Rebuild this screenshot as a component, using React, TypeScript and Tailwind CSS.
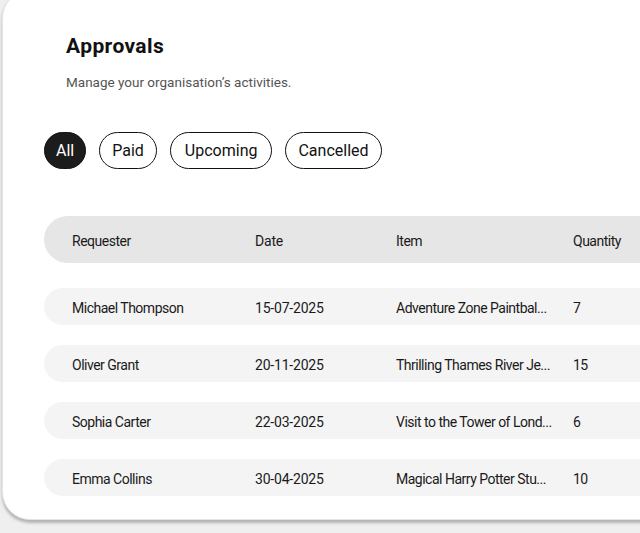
const filters = ["All", "Paid", "Upcoming", "Cancelled"];

const pillPad = ["px-[11px]", "px-[12px]", "px-[14px]", "px-[12px]"];

const rows = [
  { name: "Michael Thompson", date: "15-07-2025", item: "Adventure Zone Paintbal...", qty: "7" },
  { name: "Oliver Grant", date: "20-11-2025", item: "Thrilling Thames River Je...", qty: "15" },
  { name: "Sophia Carter", date: "22-03-2025", item: "Visit to the Tower of Lond...", qty: "6" },
  { name: "Emma Collins", date: "30-04-2025", item: "Magical Harry Potter Stu...", qty: "10" },
];

function Row({ cells, head }: { cells: string[]; head?: boolean }) {
  return (
    <div
      className={`flex items-center pl-[28px] pt-[3px] rounded-l-full text-[14px] tracking-[-0.5px] text-[#1a1a1a] ${
        head ? "h-[47px] bg-[#e6e6e6]" : "h-[37px] bg-[#f4f4f4]"
      }`}
    >
      <div className="w-[183px] shrink-0">{cells[0]}</div>
      <div className="w-[141px] shrink-0 tracking-[-0.2px]">{cells[1]}</div>
      <div className="w-[177px] shrink-0 whitespace-nowrap">{cells[2]}</div>
      <div className="shrink-0">{cells[3]}</div>
    </div>
  );
}

export default function App() {
  return (
    <div
      className="w-[640px] h-[533px] overflow-hidden bg-[#efefef]"
      style={{ fontFamily: "Roboto, 'Noto Sans', sans-serif" }}
    >
      <div className="ml-[2px] mt-[-10px] w-[700px] h-[530px] bg-white rounded-[28px] border border-[#e4e4e4] shadow-[0_3px_3px_rgba(0,0,0,0.25)]">
        <div className="pl-[63px] pt-[43px]">
          <h1 className="text-[21px] font-bold leading-[24px] tracking-[0.4px] text-[#111]">Approvals</h1>
          <p className="mt-[16px] text-[13.5px] leading-[16px] text-[#555]">
            Manage your organisation’s activities.
          </p>
        </div>
        <div className="flex gap-[13px] pl-[41px] mt-[42px]">
          {filters.map((f, i) => (
            <button
              key={f}
              className={`h-[37px] rounded-full text-[16px] border-[1.5px] border-[#111] ${pillPad[i]} ${
                i === 0 ? "bg-[#1c1c1c] text-white" : "bg-white text-[#111]"
              }`}
            >
              {f}
            </button>
          ))}
        </div>
        <div className="pl-[41px] mt-[47px] flex flex-col">
          <Row head cells={["Requester", "Date", "Item", "Quantity"]} />
          <div className="flex flex-col gap-[20px] mt-[25px]">
            {rows.map((r) => (
              <Row key={r.name} cells={[r.name, r.date, r.item, r.qty]} />
            ))}
          </div>
        </div>
      </div>
    </div>
  );
}
